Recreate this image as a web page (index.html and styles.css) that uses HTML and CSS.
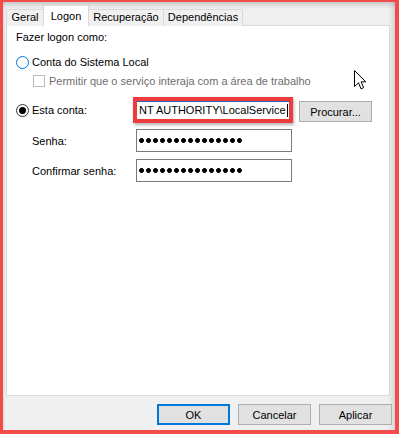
FILE: index.html
```html
<!DOCTYPE html>
<html lang="pt-BR">
<head>
    <meta charset="UTF-8">
    <meta name="viewport" content="width=device-width, initial-scale=1.0">
    <title>Propriedades do serviço - Logon</title>
    <link rel="stylesheet" href="styles.css">
</head>
<body>
    <div class="window">
        <div class="tabs">
            <div class="tab tab-geral">Geral</div>
            <div class="tab tab-active">Logon</div>
            <div class="tab tab-rec">Recuperação</div>
            <div class="tab tab-dep">Dependências</div>
        </div>

        <div class="panel">
            <div class="title">Fazer logon como:</div>

            <div class="option option-local">
                <span class="radio radio-hover"></span>
                <span>Conta do Sistema Local</span>
            </div>

            <div class="option option-desktop">
                <span class="checkbox"></span>
                <span class="disabled">Permitir que o serviço interaja com a área de trabalho</span>
            </div>

            <div class="field-row row-account">
                <div class="label-cell">
                    <span class="radio radio-checked"></span>
                    <span>Esta conta:</span>
                </div>
                <div class="highlight">
                    <span class="value">NT AUTHORITY\LocalService</span><span class="caret"></span>
                </div>
                <button class="btn btn-browse">Procurar...</button>
            </div>

            <div class="field-row row-pass">
                <div class="label-cell label-text">Senha:</div>
                <div class="input"><span class="dots" aria-label="senha"></span></div>
            </div>

            <div class="field-row row-confirm">
                <div class="label-cell label-text">Confirmar senha:</div>
                <div class="input"><span class="dots" aria-label="confirmar senha"></span></div>
            </div>
        </div>

        <div class="buttons">
            <button class="btn btn-ok">OK</button>
            <button class="btn">Cancelar</button>
            <button class="btn">Aplicar</button>
        </div>

        <svg class="cursor" width="13" height="20" viewBox="0 0 13 20">
            <path d="M0.5 0.5 V16.5 L4.5 12.8 L7 18.8 L9.6 17.7 L7.2 11.8 H11.8 Z" fill="#fff" stroke="#000" stroke-width="1" stroke-linejoin="miter"/>
        </svg>
    </div>
</body>
</html>
```

FILE: styles.css
```css
*
{
    box-sizing: border-box;
}

body
{
    margin: 0;
    font-family: "Liberation Sans", Arial, sans-serif;
    font-size: 11px;
    color: #000;
    background: #fff;
}

.window
{
    position: relative;
    width: 399px;
    height: 434px;
    background: #f0f0f0;
    border-style: solid;
    border-color: #f34a4a;
    border-width: 2px 4px 4px 3px;
    box-shadow: inset 0 6px 5px -3px rgba(0, 0, 0, 0.16), inset -6px 0 5px -3px rgba(0, 0, 0, 0.12), inset 3px 0 3px -2px rgba(0, 0, 0, 0.08);
    display: flex;
    flex-direction: column;
}

/* tabs */
.tabs
{
    display: flex;
    align-items: flex-end;
    height: 21px;
    margin: 3px 0 -1px 3px;
    position: relative;
    z-index: 1;
}

.tab
{
    height: 17px;
    line-height: 15px;
    text-align: center;
    border: 1px solid #d9d9d9;
    border-bottom: none;
    background: #f0f0f0;
}

.tab-geral { width: 38px; }
.tab-rec { width: 76px; margin-left: -1px; }
.tab-dep { width: 80px; margin-left: -1px; }

.tab-active
{
    width: 46px;
    height: 21px;
    line-height: 20px;
    margin-left: -1px;
    background: #fff;
}

/* page body */
.panel
{
    width: 384px;
    height: 371px;
    margin-left: 3px;
    background: #fff;
    border: 1px solid #d9d9d9;
    padding-top: 4px;
}

.title
{
    line-height: 14px;
    margin-left: 9px;
}

.option
{
    display: flex;
    align-items: center;
    height: 14px;
}

.option-local
{
    margin-top: 11px;
    margin-left: 9px;
    gap: 3px;
}

.option-desktop
{
    margin-top: 5px;
    margin-left: 26px;
    gap: 4px;
}

.radio
{
    width: 13px;
    height: 13px;
    border-radius: 50%;
    border: 1px solid #333;
    background: #fff;
    flex: none;
    display: flex;
    align-items: center;
    justify-content: center;
}

.radio-hover
{
    border-color: #0078d7;
}

.radio-checked::after
{
    content: "";
    width: 7px;
    height: 7px;
    border-radius: 50%;
    background: #000;
}

.checkbox
{
    width: 12px;
    height: 12px;
    border: 1px solid #bcbcbc;
    background: #fff;
    flex: none;
}

.disabled
{
    color: #6d6d6d;
}

.field-row
{
    display: flex;
    align-items: center;
    margin-left: 9px;
}

.row-account { margin-top: 9px; }
.row-pass { margin-top: 6px; }
.row-confirm { margin-top: 7px; }

.label-cell
{
    display: flex;
    align-items: center;
    gap: 3px;
    width: 117px;
    flex: none;
}

.label-text
{
    width: 120px;
    padding-left: 16px;
}

.highlight
{
    width: 160px;
    height: 26px;
    border: 4px solid #ec3c3e;
    background: #fff;
    box-shadow: inset 0 1px 0 #2b62b0, 1px 2px 3px rgba(0, 0, 0, 0.3);
    display: flex;
    align-items: center;
    padding-left: 2px;
    white-space: nowrap;
    overflow: hidden;
}

.caret
{
    display: inline-block;
    width: 1px;
    height: 13px;
    background: #000;
    margin-left: 1px;
}

.input
{
    width: 156px;
    height: 23px;
    border: 1px solid #7a7a7a;
    background: #fff;
    display: flex;
    align-items: center;
    padding-left: 2px;
}

.dots
{
    display: block;
    width: 103px;
    height: 5px;
    background-image: radial-gradient(circle at 2.5px 2.5px, #000 2.1px, rgba(0, 0, 0, 0) 2.7px);
    background-size: 7px 5px;
    background-repeat: repeat-x;
}

.btn
{
    width: 73px;
    height: 21px;
    padding: 0;
    font-family: inherit;
    font-size: 11px;
    color: #000;
    background: #e1e1e1;
    border: 1px solid #adadad;
}

.btn-browse
{
    margin-left: 6px;
    margin-top: 3px;
}

.buttons
{
    display: flex;
    justify-content: flex-end;
    gap: 8px;
    margin-top: 8px;
    margin-right: 3px;
}

.btn-ok
{
    border: 2px solid #0078d7;
}

.cursor
{
    position: absolute;
    left: 351px;
    top: 68px;
}
```
